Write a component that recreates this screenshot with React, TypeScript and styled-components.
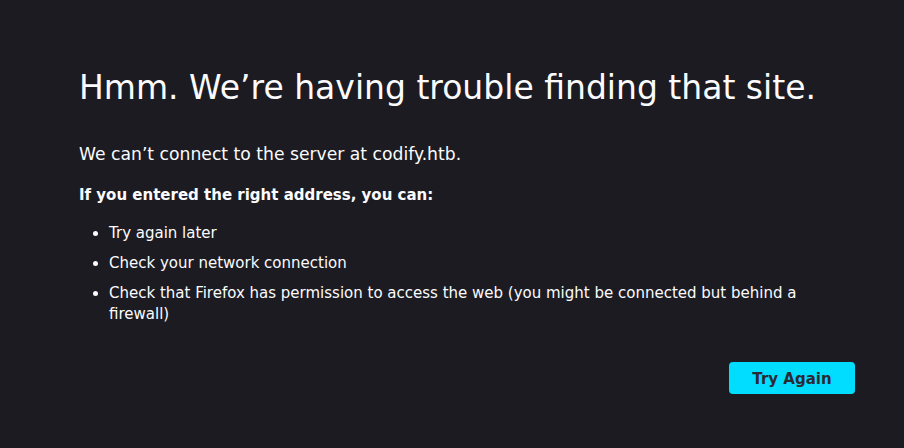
import React from "react";
import styled, { createGlobalStyle } from "styled-components";

const Global = createGlobalStyle`
  html, body { margin: 0; padding: 0; background: #1c1b22; }
  body { font-family: "DejaVu Sans", sans-serif; color: #fbfbfe; }
`;

const Page = styled.div`
  width: 904px;
  height: 448px;
  box-sizing: border-box;
  padding: 68px 49px 0 79px;
`;

const Title = styled.h1`
  margin: 0 0 34px;
  font-size: 33px;
  font-weight: 400;
  line-height: 40px;
  letter-spacing: 0;
`;

const Lead = styled.p`
  margin: 0 0 19px;
  font-size: 17.2px;
  line-height: 24px;
`;

const Strong = styled.p`
  margin: 0 0 18px;
  font-size: 15px;
  font-weight: 700;
  line-height: 20px;
`;

const List = styled.ul`
  margin: 0;
  padding: 0 0 0 30px;
  font-size: 15px;
  line-height: 21px;
`;

const Item = styled.li`
  margin-bottom: 9px;
  padding-right: 40px;
`;

const Actions = styled.div`
  display: flex;
  justify-content: flex-end;
  margin-top: 37px;
`;

const Button = styled.button`
  width: 126px;
  height: 32px;
  padding: 1px 0 0;
  border: none;
  border-radius: 4px;
  background: #00ddff;
  color: #2b2a33;
  font-family: "DejaVu Sans", sans-serif;
  font-size: 15px;
  font-weight: 700;
  cursor: pointer;
`;

export default function App() {
  return (
    <>
      <Global />
      <Page>
        <Title>Hmm. We’re having trouble finding that site.</Title>
        <Lead>We can’t connect to the server at codify.htb.</Lead>
        <Strong>If you entered the right address, you can:</Strong>
        <List>
          <Item>Try again later</Item>
          <Item>Check your network connection</Item>
          <Item>
            Check that Firefox has permission to access the web (you might be
            connected but behind a firewall)
          </Item>
        </List>
        <Actions>
          <Button>Try Again</Button>
        </Actions>
      </Page>
    </>
  );
}
